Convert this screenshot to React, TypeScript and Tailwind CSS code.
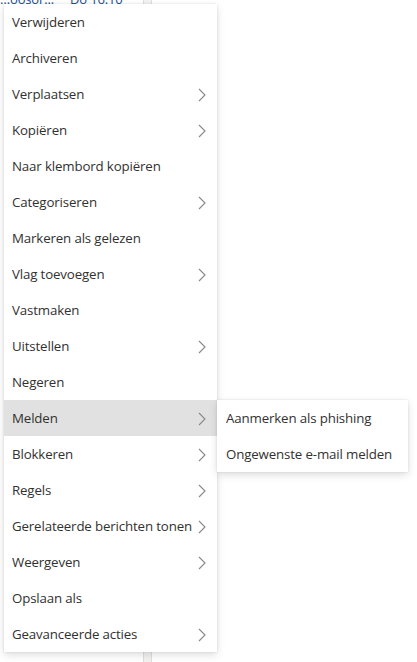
type Item = { label: string; sub?: boolean; active?: boolean }

const items: Item[] = [
  { label: 'Verwijderen' },
  { label: 'Archiveren' },
  { label: 'Verplaatsen', sub: true },
  { label: 'Kopiëren', sub: true },
  { label: 'Naar klembord kopiëren' },
  { label: 'Categoriseren', sub: true },
  { label: 'Markeren als gelezen' },
  { label: 'Vlag toevoegen', sub: true },
  { label: 'Vastmaken' },
  { label: 'Uitstellen', sub: true },
  { label: 'Negeren' },
  { label: 'Melden', sub: true, active: true },
  { label: 'Blokkeren', sub: true },
  { label: 'Regels', sub: true },
  { label: 'Gerelateerde berichten tonen', sub: true },
  { label: 'Weergeven', sub: true },
  { label: 'Opslaan als' },
  { label: 'Geavanceerde acties', sub: true },
]

const subItems = ['Aanmerken als phishing', 'Ongewenste e-mail melden']

function Chevron() {
  return (
    <svg width="8" height="14" viewBox="0 0 8 14" className="shrink-0">
      <path d="M1 1l6 6-6 6" fill="none" stroke="#8a8886" strokeWidth="1.1" />
    </svg>
  )
}

export default function App() {
  return (
    <div className="relative h-[662px] w-[417px] overflow-hidden bg-white font-['Open_Sans',sans-serif] text-[13.3px] tracking-[-0.15px] text-[#323130]">
      {/* message list behind the menu */}
      <div className="flex h-full">
        <div className="w-[144px] border-r border-[#e1dfdd] bg-white">
          <div className="flex -mt-[10px] gap-3 text-[13px] text-[#1b4f8a]">
            <span>…oosor...</span>
            <span className="ml-1">Do 16:10</span>
          </div>
        </div>
        <div className="w-[8px] border-r border-[#e1dfdd] bg-[#f3f2f1]" />
        <div className="flex-1 bg-white" />
      </div>

      {/* context menu */}
      <div className="absolute left-[4px] top-[4px] w-[213px] bg-white shadow-[0_3px_8px_rgba(0,0,0,0.13),0_0_2px_rgba(0,0,0,0.11)]">
        {items.map(item => (
          <div
            key={item.label}
            className={`flex h-[36px] items-center justify-between gap-[2px] pl-[8px] pr-[11px] pt-[1px] ${item.active ? 'bg-[#e1e1e1]' : ''}`}
          >
            <span className="whitespace-nowrap">{item.label}</span>
            {item.sub && <Chevron />}
          </div>
        ))}
      </div>

      {/* submenu */}
      <div className="absolute left-[217px] top-[400px] w-[191px] bg-white shadow-[0_3px_8px_rgba(0,0,0,0.13),0_0_2px_rgba(0,0,0,0.11)]">
        {subItems.map(s => (
          <div key={s} className="flex h-[36px] items-center whitespace-nowrap pl-[9px] pt-[1px]">
            {s}
          </div>
        ))}
      </div>
    </div>
  )
}
